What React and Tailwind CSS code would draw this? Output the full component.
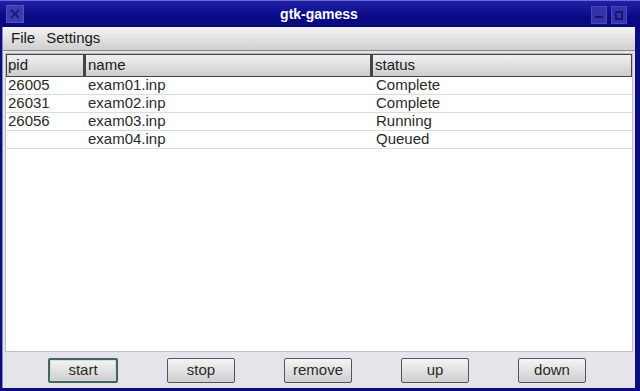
import React from "react";

const rows = [
  ["26005", "exam01.inp", "Complete"],
  ["26031", "exam02.inp", "Complete"],
  ["26056", "exam03.inp", "Running"],
  ["", "exam04.inp", "Queued"],
];

function Btn({ label, focused }) {
  return (
    <div
      className={
        "h-[25px] flex items-center justify-center rounded-[2px] text-[#2a2a2a] " +
        (focused
          ? "w-[70px] border-2 border-[#3f6660] shadow-[inset_0_0_0_1px_#d8d8d8]"
          : "w-[68px] border border-[#555]")
      }
      style={{ background: "linear-gradient(#f4f4f4, #cfcfcf)" }}
    >
      {label}
    </div>
  );
}

export default function App() {
  return (
    <div
      className="w-[640px] h-[391px] flex flex-col bg-[#0c0c80] text-[15px] overflow-hidden"
      style={{ fontFamily: '"Liberation Sans", Arial, sans-serif' }}
    >
      {/* title bar */}
      <div
        className="h-[27px] shrink-0 relative flex items-center justify-center border-t border-[#6a6ad0]"
        style={{ background: "linear-gradient(#2020a8, #0a0a86 60%, #08087a)" }}
      >
        <div className="absolute left-[6px] top-[4px] w-[18px] h-[18px] bg-[#3c3cae] border border-[#5252c0] flex items-center justify-center">
          <svg width="12" height="12" viewBox="0 0 12 12">
            <path d="M2 2 L10 10 M10 2 L2 10" stroke="#1a1a80" strokeWidth="2" />
          </svg>
        </div>
        <span className="text-white font-bold text-[14px] ml-[-2px]">gtk-gamess</span>
        <div className="absolute left-[591px] top-[5px] w-[16px] h-[18px] bg-[#3434a6] border border-[#4848b8] flex items-end justify-center pb-[5px]">
          <div className="w-[8px] h-[2px] bg-[#14147a]" />
        </div>
        <div className="absolute left-[611px] top-[5px] w-[16px] h-[18px] bg-[#3434a6] border border-[#4848b8] flex items-center justify-center">
          <div className="w-[8px] h-[9px] border-2 border-[#14147a]" />
        </div>
      </div>

      {/* client area */}
      <div className="flex-1 flex flex-col ml-[2px] mr-[5px] mb-[3px] bg-[#e4e4ea] border-l border-[#8888a8]">
        {/* menu */}
        <div
          className="h-[24px] shrink-0 flex items-center gap-[11px] pl-[8px] text-[#1a1a1a] border-b border-[#8a8a8a]"
          style={{ background: "linear-gradient(#f4f4f4, #cfcfcf)" }}
        >
          <span>File</span>
          <span>Settings</span>
        </div>

        {/* list */}
        <div className="flex-1 flex flex-col mx-[2px] mt-[2px] bg-white border border-[#bdbdc5]">
          <div className="h-[23px] shrink-0 flex text-[#1a1a1a]">
            <div
              className="w-[78px] border border-[#444] flex items-center pl-[1px]"
              style={{ background: "linear-gradient(#f0f0f0, #cdcdcd)" }}
            >
              pid
            </div>
            <div
              className="w-[287px] border border-[#444] border-l-2 flex items-center pl-[2px]"
              style={{ background: "linear-gradient(#f0f0f0, #cdcdcd)" }}
            >
              name
            </div>
            <div
              className="flex-1 border border-[#444] border-l-2 flex items-center pl-[2px]"
              style={{ background: "linear-gradient(#f0f0f0, #cdcdcd)" }}
            >
              status
            </div>
          </div>
          {rows.map((r, i) => (
            <div key={i} className="h-[18px] flex items-center border-b border-[#d8dde2] text-[#2a2a2a]">
              <div className="w-[79px] pl-[2px]">{r[0]}</div>
              <div className="w-[287px] pl-[3px]">{r[1]}</div>
              <div className="flex-1 pl-[4px]">{r[2]}</div>
            </div>
          ))}
        </div>

        {/* buttons */}
        <div className="h-[36px] shrink-0 flex items-center pl-[45px] gap-[49px]">
          <Btn label="start" focused />
          <Btn label="stop" />
          <Btn label="remove" />
          <Btn label="up" />
          <Btn label="down" />
        </div>
      </div>
    </div>
  );
}
